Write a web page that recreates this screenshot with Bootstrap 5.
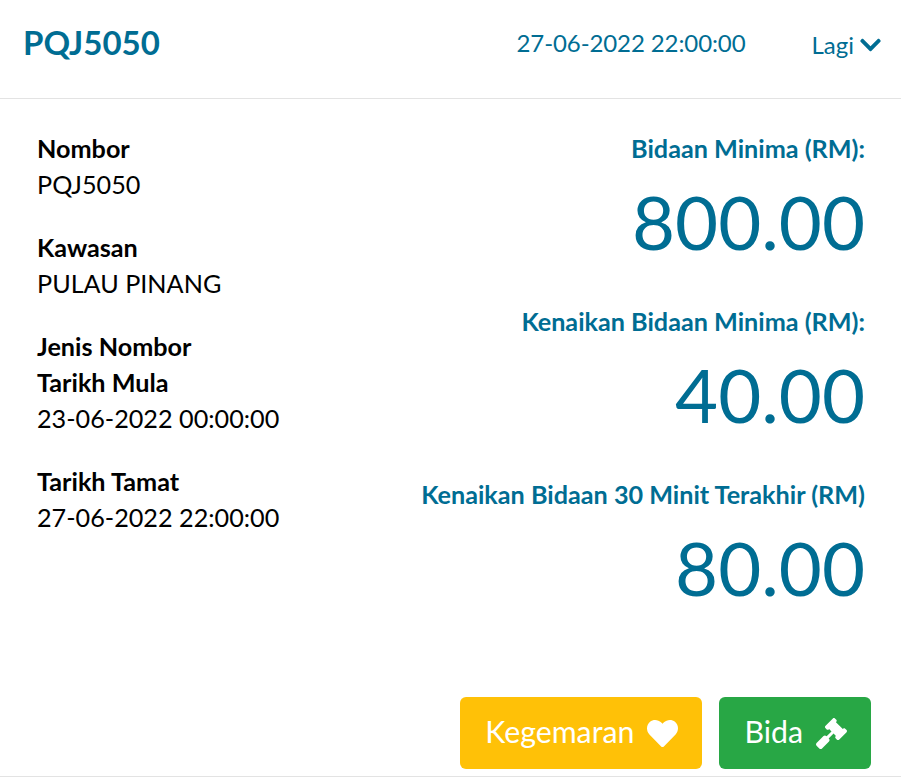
<!DOCTYPE html>
<html>
<head>
    <link href="https://cdn.jsdelivr.net/npm/bootstrap@5.3.0/dist/css/bootstrap.min.css" rel="stylesheet">
    <style>
        html, body {
            height: 100%;
        }
        body {
            font-family: Lato, sans-serif;
            color: #000;
            background: #fff;
            overflow: hidden;
        }
        .plate-card {
            width: 901px;
            height: 777px;
            border: 0;
            border-bottom: 1px solid #e3e3e3;
            border-radius: 0;
        }
        .plate-head {
            height: 99px;
            padding: 0 20px 12px 23px;
            background: #fff;
            border-bottom: 1px solid #e3e3e3;
            color: #006d93;
        }
        .plate-title {
            font-size: 33px;
            font-weight: 700;
            margin: 0;
        }
        .plate-date {
            font-size: 24px;
            letter-spacing: -0.1px;
            margin-right: 66px;
        }
        .plate-more {
            font-size: 24px;
            gap: 6px;
            margin-top: 4px;
        }
        .plate-body {
            padding: 31px 36px 0 37px;
        }
        .info-label {
            font-size: 25.2px;
            font-weight: 700;
            line-height: 36px;
        }
        .info-value {
            font-size: 25.2px;
            line-height: 36px;
            margin-bottom: 27px;
        }
        .bid-label {
            font-size: 25.2px;
            font-weight: 700;
            line-height: 36px;
            color: #006d93;
        }
        .bid-amount {
            font-size: 74.3px;
            line-height: 96px;
            margin: 8px 0 33px;
            color: #006d93;
        }
        .plate-foot {
            gap: 17px;
            padding-right: 30px;
            bottom: 7px;
            right: 0;
        }
        .foot-btn {
            height: 72px;
            font-size: 30.3px;
            color: #fff;
            border: 0;
            border-radius: 6px;
            padding: 0 24px 3px 25px;
            gap: 13px;
        }
        .foot-btn svg {
            margin-top: 3px;
        }
        .foot-btn:hover {
            color: #fff;
        }
        .btn-fav {
            background: #ffc107;
        }
        .btn-bid {
            background: #28a745;
        }
    </style>
</head>
<body>
<div class="card plate-card position-relative">
    <div class="plate-head d-flex align-items-center">
        <h1 class="plate-title">PQJ5050</h1>
        <div class="plate-date ms-auto">27-06-2022 22:00:00</div>
        <div class="plate-more d-flex align-items-center">Lagi
            <svg width="21" height="24" viewBox="0 0 448 512"><path fill="#006d93" d="M207.029 381.476L12.686 187.132c-9.373-9.373-9.373-24.569 0-33.941l22.667-22.667c9.357-9.357 24.522-9.375 33.901-.04L224 284.505l154.745-154.021c9.379-9.335 24.544-9.317 33.901.04l22.667 22.667c9.373 9.373 9.373 24.569 0 33.941L240.971 381.476c-9.373 9.372-24.569 9.372-33.942 0z"/></svg>
        </div>
    </div>
    <div class="plate-body row g-0">
        <div class="col-5">
            <div class="info-label">Nombor</div>
            <div class="info-value">PQJ5050</div>
            <div class="info-label">Kawasan</div>
            <div class="info-value">PULAU PINANG</div>
            <div class="info-label">Jenis Nombor</div>
            <div class="info-label">Tarikh Mula</div>
            <div class="info-value">23-06-2022 00:00:00</div>
            <div class="info-label">Tarikh Tamat</div>
            <div class="info-value">27-06-2022 22:00:00</div>
        </div>
        <div class="col-7 text-end">
            <div class="bid-label">Bidaan Minima (RM):</div>
            <div class="bid-amount">800.00</div>
            <div class="bid-label">Kenaikan Bidaan Minima (RM):</div>
            <div class="bid-amount">40.00</div>
            <div class="bid-label">Kenaikan Bidaan 30 Minit Terakhir (RM)</div>
            <div class="bid-amount">80.00</div>
        </div>
    </div>
    <div class="plate-foot d-flex position-absolute">
        <button type="button" class="btn foot-btn btn-fav d-flex align-items-center">Kegemaran
            <svg width="31" height="31" viewBox="0 0 512 512"><path fill="#fff" d="M462.3 62.6C407.5 15.9 326 24.3 275.7 76.2L256 96.500l-19.700-20.300C186.100 24.300 104.500 15.900 49.700 62.600c-62.800 53.600-66.100 149.800-9.900 207.900l193.500 199.800c12.500 12.900 32.800 12.900 45.300 0l193.500-199.800c56.300-58.100 53-154.300-9.800-207.900z"/></svg>
        </button>
        <button type="button" class="btn foot-btn btn-bid d-flex align-items-center">Bida
            <svg width="31" height="31" viewBox="0 0 512 512"><path fill="#fff" d="M504.971 199.362l-22.627-22.627c-9.373-9.373-24.569-9.373-33.941 0l-5.657 5.657L329.608 69.255l5.657-5.657c9.373-9.373 9.373-24.569 0-33.941L312.638 7.029c-9.373-9.373-24.569-9.373-33.941 0L154.246 131.480c-9.373 9.373-9.373 24.569 0 33.941l22.627 22.627c9.373 9.373 24.569 9.373 33.941 0l5.657-5.657 39.598 39.598-81.040 81.040-5.657-5.657c-12.497-12.497-32.758-12.497-45.255 0L9.373 412.118c-12.497 12.497-12.497 32.758 0 45.255l45.255 45.255c12.497 12.497 32.758 12.497 45.255 0l114.745-114.745c12.497-12.497 12.497-32.758 0-45.255l-5.657-5.657 81.040-81.040 39.598 39.598-5.657 5.657c-9.373 9.373-9.373 24.569 0 33.941l22.627 22.627c9.373 9.373 24.569 9.373 33.941 0l124.451-124.451c9.372-9.372 9.372-24.568 0-33.941z"/></svg>
        </button>
    </div>
</div>
</body>
</html>
